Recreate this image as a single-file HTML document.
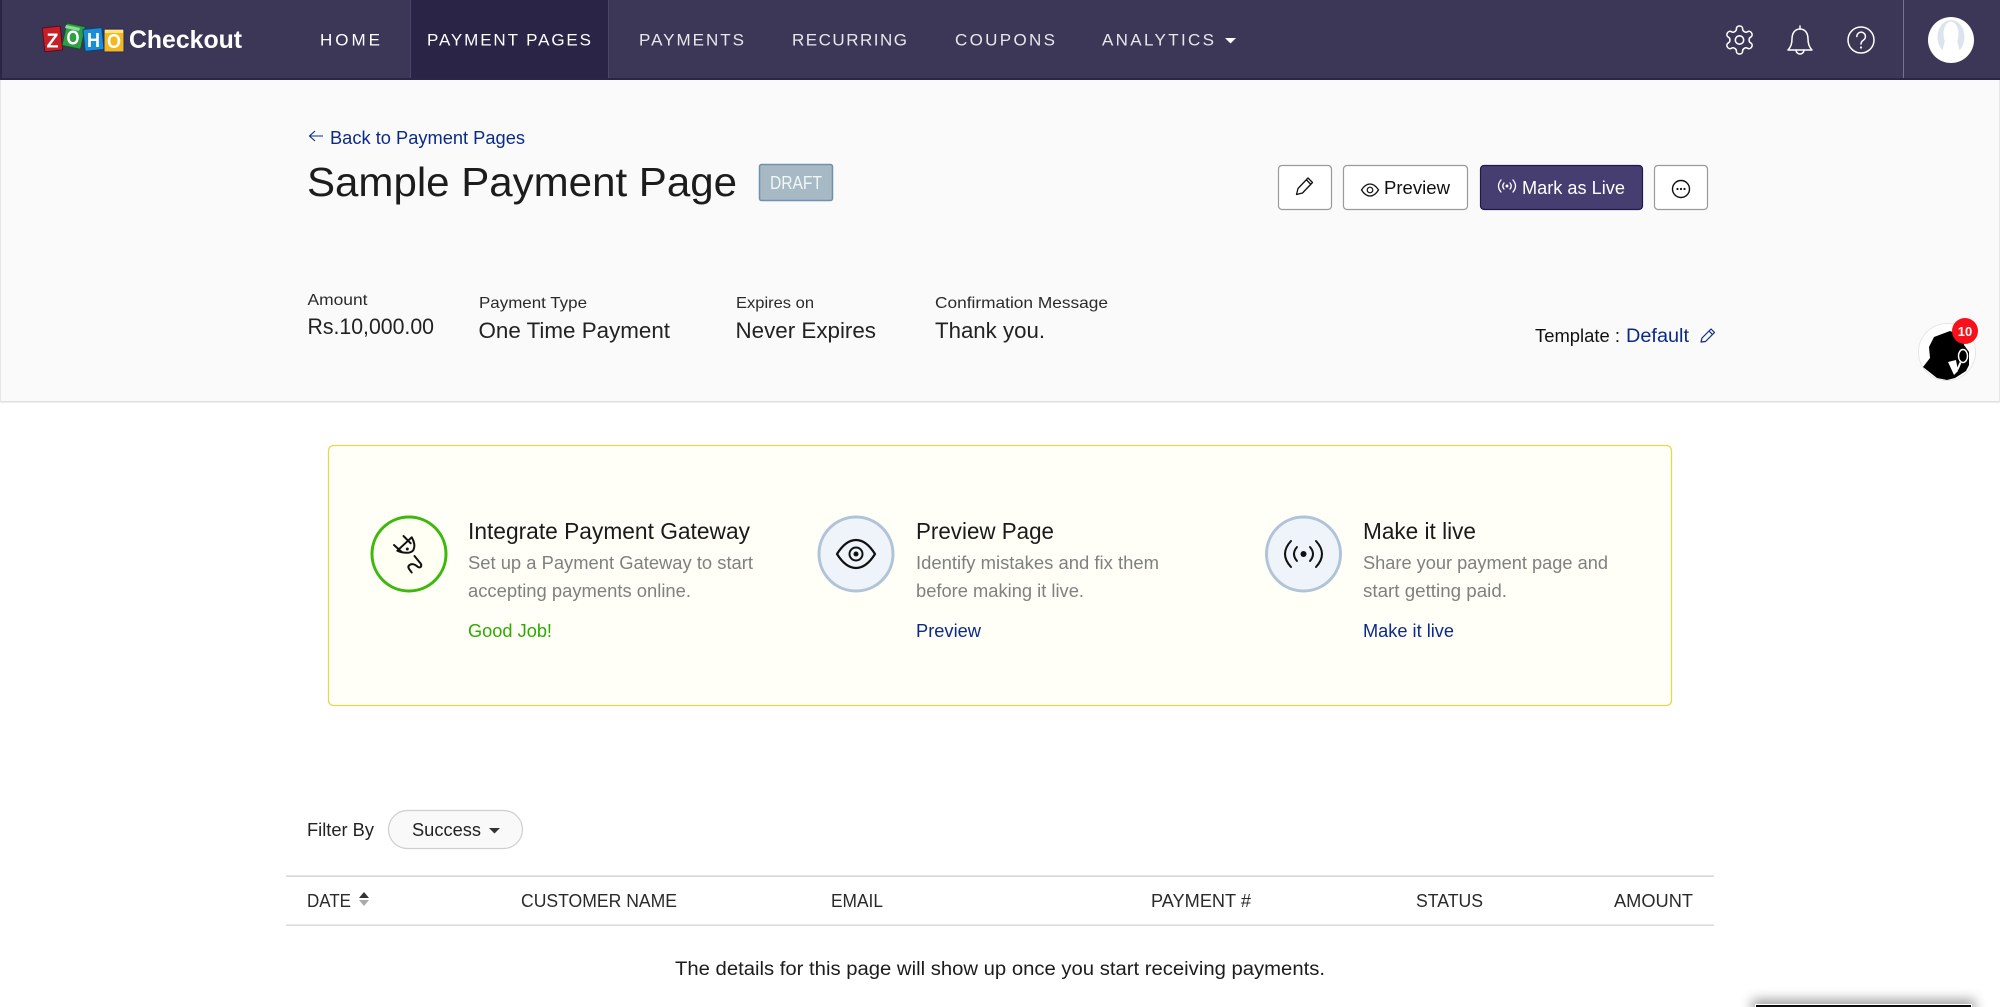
<!DOCTYPE html>
<html lang="en"><head><meta charset="utf-8"><title>Sample Payment Page</title>
<style>
html,body{margin:0;padding:0;background:#fff;width:2000px;height:1007px;overflow:hidden}
svg{display:block}
text{font-family:"Liberation Sans",Arial,sans-serif;fill:#111}
.nav{fill:#fff;font-size:17px}
.lbl{font-size:16px;fill:#2a2a2a}
.val{font-size:22px;fill:#222}
.ttl{font-size:23px;fill:#1a1a1a}
.dsc{font-size:18px;fill:#808080}
.lnk{font-size:18px;fill:#0b2a88}
.hdr{font-size:18px;fill:#2a2a2a}
</style></head><body>
<svg xmlns="http://www.w3.org/2000/svg" width="2000" height="1007" viewBox="0 0 2000 1007">
<defs><filter id="sh" x="-20%" y="-400%" width="140%" height="900%"><feGaussianBlur stdDeviation="6"/></filter></defs>
<rect width="2000" height="1007" fill="#fff"/>

<!-- top nav -->
<rect width="2000" height="79" fill="#3c3757"/>
<rect y="78" width="2000" height="2" fill="#2a2645"/>
<rect width="2" height="79" fill="#2a2645"/>
<rect x="410" width="198" height="78" fill="#2a2547"/>
<rect x="410" width="1" height="78" fill="#4c4768"/><rect x="608" width="1" height="78" fill="#4c4768"/>
<rect x="1903" width="1" height="78" fill="#77738c"/>

<!-- logo -->
<g font-weight="bold" font-size="20">
<rect x="43.500" y="27" width="18" height="24" rx="1" fill="#c81e28" stroke="#5a0c18" transform="rotate(-6 52 39)"/>
<rect x="64" y="24.500" width="19" height="23" rx="1" fill="#2f9e44" stroke="#174f24" transform="rotate(12 73 37)"/>
<path d="M66 25l14 3-1 3-14-3z" fill="#8fdc9a" transform="rotate(0 73 37)"/>
<rect x="84" y="28.500" width="19" height="22" rx="1" fill="#1b8ed6" stroke="#0d3f78" transform="rotate(-6 93 40)"/>
<rect x="104" y="29" width="20" height="23" rx="1" fill="#f4b81a" stroke="#1a2a80"/>
<path d="M105 30h18v3h-18z" fill="#ffe680"/>
<text x="46.500" y="47.500" style="fill:#fff" textLength="12" lengthAdjust="spacingAndGlyphs">Z</text>
<text x="66.500" y="44.500" style="fill:#fff" textLength="13" lengthAdjust="spacingAndGlyphs">O</text>
<text x="87" y="47" style="fill:#fff" textLength="13" lengthAdjust="spacingAndGlyphs">H</text>
<text x="107" y="48" style="fill:#fff" textLength="14" lengthAdjust="spacingAndGlyphs">O</text>
</g>
<text x="129" y="48" font-size="25" font-weight="bold" style="fill:#fff" textLength="113" lengthAdjust="spacingAndGlyphs">Checkout</text>

<text class="nav" x="320" y="45.500" textLength="60">HOME</text>
<text class="nav" x="427" y="45.500" textLength="164">PAYMENT PAGES</text>
<text class="nav" x="639" y="45.500" textLength="105" opacity=".88">PAYMENTS</text>
<text class="nav" x="792" y="45.500" textLength="115" opacity=".88">RECURRING</text>
<text class="nav" x="955" y="45.500" textLength="100" opacity=".88">COUPONS</text>
<text class="nav" x="1102" y="45.500" textLength="112" opacity=".88">ANALYTICS</text>
<path d="M1225 38h11l-5.500 5.500z" fill="#fff"/>

<!-- nav icons -->
<g fill="none" stroke="#fff" stroke-width="1.500" stroke-linejoin="round" stroke-linecap="round">
<g transform="translate(1722.700 23.200) scale(1.400)" stroke-width="1.100"><path d="M12.220 2h-.44a2 2 0 0 0-2 2v.18a2 2 0 0 1-1 1.730l-.43.250a2 2 0 0 1-2 0l-.15-.08a2 2 0 0 0-2.730.730l-.22.380a2 2 0 0 0 .730 2.730l.150.100a2 2 0 0 1 1 1.720v.510a2 2 0 0 1-1 1.740l-.150.090a2 2 0 0 0-.730 2.730l.220.380a2 2 0 0 0 2.730.730l.150-.08a2 2 0 0 1 2 0l.430.250a2 2 0 0 1 1 1.730V20a2 2 0 0 0 2 2h.440a2 2 0 0 0 2-2v-.18a2 2 0 0 1 1-1.730l.430-.25a2 2 0 0 1 2 0l.150.080a2 2 0 0 0 2.730-.73l.220-.39a2 2 0 0 0-.730-2.730l-.150-.08a2 2 0 0 1-1-1.740v-.5a2 2 0 0 1 1-1.740l.150-.09a2 2 0 0 0 .730-2.730l-.220-.38a2 2 0 0 0-2.730-.73l-.150.080a2 2 0 0 1-2 0l-.430-.25a2 2 0 0 1-1-1.730V4a2 2 0 0 0-2-2z"/><circle cx="12" cy="12" r="3"/></g>
<path d="M1788 50c3-3 4-6 4-11 0-6 3-10 8-10s8 4 8 10c0 5 1 8 4 11z"/>
<path d="M1800 26v3M1796 50a4 4 0 0 0 8 0"/>
<circle cx="1861" cy="40" r="13"/>
<path d="M1856.800 36.500a4.300 4.300 0 1 1 6.800 3.500c-1.700 1.100-2.600 2-2.600 4"/>
</g>
<circle cx="1861" cy="47.500" r="1.100" fill="#fff"/>

<!-- avatar -->
<circle cx="1951" cy="40" r="23" fill="#fff"/>
<ellipse cx="1951" cy="37" rx="13.500" ry="17" fill="#dde3ee"/>
<ellipse cx="1951" cy="34" rx="7.500" ry="12.500" fill="#fff"/>
<path d="M1945 40h12l4 17h-20z" fill="#fff"/>

<!-- page header -->
<rect y="80" width="2000" height="322" fill="#fafafa"/>
<rect y="401" width="2000" height="1.500" fill="#dfdfdf"/>
<rect y="80" width="1" height="322" fill="#e6e6e6"/><rect x="1999" y="80" width="1" height="322" fill="#e6e6e6"/>

<path d="M323 136h-13M315 131l-5.500 5 5.500 5" fill="none" stroke="#0b2a88" stroke-width="1.100"/>
<text class="lnk" x="330" y="144" textLength="195" lengthAdjust="spacingAndGlyphs">Back to Payment Pages</text>
<text x="307" y="196" font-size="41" style="fill:#1c1c1c" textLength="430" lengthAdjust="spacingAndGlyphs">Sample Payment Page</text>

<rect x="759.500" y="164.500" width="73" height="36" rx="2" fill="#a7b9c4" stroke="#6f93a8" stroke-width="1.500"/>
<text x="770" y="189" font-size="18" style="fill:#f2f6f8" textLength="52" lengthAdjust="spacingAndGlyphs">DRAFT</text>

<!-- buttons -->
<g fill="#fff" stroke="#9a9a9a" stroke-width="1.200">
<rect x="1278.500" y="165.500" width="53" height="44" rx="3.500"/>
<rect x="1343.500" y="165.500" width="124" height="44" rx="3.500"/>
<rect x="1654.500" y="165.500" width="53" height="44" rx="3.500"/>
</g>
<rect x="1480.500" y="165.500" width="162" height="44" rx="3.500" fill="#463d70" stroke="#1e1a4a" stroke-width="1.200"/>
<path d="M1296.500 194.500l1.500-6 10-10.500 4.500 4.500-10 10.500zM1306.500 180l4.500 4.500" fill="none" stroke="#111" stroke-width="1.300" stroke-linejoin="round"/>
<path d="M1361.500 190c2.500-4 5.500-6 8.500-6s6 2 8.500 6c-2.500 4-5.500 6-8.500 6s-6-2-8.500-6z" fill="none" stroke="#111" stroke-width="1.300"/>
<circle cx="1370" cy="190" r="2.800" fill="none" stroke="#111" stroke-width="1.200"/>
<text x="1384" y="194" font-size="18" textLength="66" lengthAdjust="spacingAndGlyphs">Preview</text>
<g fill="none" stroke="#fff" stroke-width="1.300" stroke-linecap="round">
<path d="M1501 180q-5 6 0 12M1504 183q-2.500 3 0 6M1513 180q5 6 0 12M1510 183q2.500 3 0 6"/>
</g>
<circle cx="1507" cy="186" r="1.500" fill="#fff"/>
<text x="1522" y="194" font-size="18" style="fill:#fff" textLength="103" lengthAdjust="spacingAndGlyphs">Mark as Live</text>
<circle cx="1681" cy="189" r="8.500" fill="none" stroke="#111" stroke-width="1.400"/>
<circle cx="1677.500" cy="189" r="1.100" fill="#111"/><circle cx="1681" cy="189" r="1.100" fill="#111"/><circle cx="1684.500" cy="189" r="1.100" fill="#111"/>

<!-- info -->
<text class="lbl" x="307.500" y="305" textLength="60" lengthAdjust="spacingAndGlyphs">Amount</text>
<text class="lbl" x="479" y="308" textLength="108" lengthAdjust="spacingAndGlyphs">Payment Type</text>
<text class="lbl" x="736" y="308" textLength="78" lengthAdjust="spacingAndGlyphs">Expires on</text>
<text class="lbl" x="935" y="308" textLength="173" lengthAdjust="spacingAndGlyphs">Confirmation Message</text>
<text class="val" x="307.500" y="334" textLength="126.500" lengthAdjust="spacingAndGlyphs">Rs.10,000.00</text>
<text class="val" x="478.500" y="338" textLength="191.500" lengthAdjust="spacingAndGlyphs">One Time Payment</text>
<text class="val" x="735.500" y="338" textLength="140.500" lengthAdjust="spacingAndGlyphs">Never Expires</text>
<text class="val" x="935" y="338" textLength="110" lengthAdjust="spacingAndGlyphs">Thank you.</text>
<text x="1535" y="342" font-size="18.500" textLength="85" lengthAdjust="spacingAndGlyphs">Template :</text>
<text x="1626" y="342" font-size="19" style="fill:#0b2a88" textLength="63" lengthAdjust="spacingAndGlyphs">Default</text>
<path d="M1701 342l1-4 9-9 3.500 3.500-9 9zM1709 331l3.500 3.500" fill="none" stroke="#0b2a88" stroke-width="1.200" stroke-linejoin="round"/>

<!-- floating widget -->
<circle cx="1947" cy="352" r="28.500" fill="#fff" stroke="#e6e6e6"/>
<path d="M1934 337l16-6 12 5 2 9 5 7v13l-3 6-11 7-8 2-10-2-14-11 7-9-1-11z" fill="#000"/>
<path d="M1948 362l8-2 2 11-4 4z" fill="#fff"/>
<ellipse cx="1963" cy="356" rx="4.500" ry="6.500" fill="none" stroke="#fff" stroke-width="1.500"/>
<path d="M1960.500 362.500l-3 7" stroke="#fff" stroke-width="2"/>
<circle cx="1965" cy="331" r="13" fill="#f8101a"/>
<text x="1965" y="336" font-size="13" font-weight="bold" text-anchor="middle" style="fill:#fff">10</text>

<!-- setup card -->
<rect x="328.500" y="445.500" width="1343" height="260" rx="5" fill="#fffff8" stroke="#e4d94c" stroke-width="1.300"/>
<circle cx="409" cy="554" r="37" fill="#fffff3" stroke="#3cb90c" stroke-width="3"/>
<circle cx="856" cy="554" r="37" fill="#eff4fa" stroke="#b0c4d8" stroke-width="3"/>
<circle cx="1303.500" cy="554" r="37" fill="#eff4fa" stroke="#b0c4d8" stroke-width="3"/>

<g fill="none" stroke="#111" stroke-width="2" stroke-linecap="round" stroke-linejoin="round">
<path d="M403.500 536l7.200 7.300M394 545l8 7.300M397.300 550.700l14.400-13.400c2.800 4.500 3.500 9.500 1.500 13-2.500 3.500-10 3-15.900.4z"/>
<path d="M414.500 556l6.500 8c1 3-1 4-3 3-4-3.500-7-3.500-9-1.500-2 2 1 4.500 2.700 7"/>
<path d="M837 554c5-8 11-14 19-14s14 6 19 14c-5 8-11 14-19 14s-14-6-19-14z" stroke-width="2.200"/>
<circle cx="856" cy="554" r="6.500"/>
<path d="M1291 541q-12 13 0 26M1297 547q-6 7 0 14M1316 541q12 13 0 26M1310 547q6 7 0 14"/>
</g>
<circle cx="407.300" cy="549" r="1.500" fill="#111"/>
<circle cx="856" cy="554" r="2.500" fill="#111"/>
<circle cx="1303.500" cy="554" r="3" fill="#111"/>

<text class="ttl" x="468" y="539" textLength="282" lengthAdjust="spacingAndGlyphs">Integrate Payment Gateway</text>
<text class="dsc" x="468" y="569" textLength="285" lengthAdjust="spacingAndGlyphs">Set up a Payment Gateway to start</text>
<text class="dsc" x="468" y="597" textLength="223" lengthAdjust="spacingAndGlyphs">accepting payments online.</text>
<text x="468" y="637" font-size="18" style="fill:#2eaa00" textLength="84" lengthAdjust="spacingAndGlyphs">Good Job!</text>

<text class="ttl" x="916" y="539" textLength="138" lengthAdjust="spacingAndGlyphs">Preview Page</text>
<text class="dsc" x="916" y="569" textLength="243" lengthAdjust="spacingAndGlyphs">Identify mistakes and fix them</text>
<text class="dsc" x="916" y="597" textLength="168" lengthAdjust="spacingAndGlyphs">before making it live.</text>
<text class="lnk" x="916" y="637" textLength="65" lengthAdjust="spacingAndGlyphs">Preview</text>

<text class="ttl" x="1363" y="539" textLength="113" lengthAdjust="spacingAndGlyphs">Make it live</text>
<text class="dsc" x="1363" y="569" textLength="245" lengthAdjust="spacingAndGlyphs">Share your payment page and</text>
<text class="dsc" x="1363" y="597" textLength="144" lengthAdjust="spacingAndGlyphs">start getting paid.</text>
<text class="lnk" x="1363" y="637" textLength="91" lengthAdjust="spacingAndGlyphs">Make it live</text>

<!-- filter -->
<text x="307" y="836" font-size="18" style="fill:#222" textLength="67" lengthAdjust="spacingAndGlyphs">Filter By</text>
<rect x="388.500" y="810.500" width="134" height="38" rx="19" fill="#f9f9f9" stroke="#cfcfcf" stroke-width="1.200"/>
<text x="412" y="836" font-size="18" style="fill:#222" textLength="69" lengthAdjust="spacingAndGlyphs">Success</text>
<path d="M489 828h11l-5.500 5.500z" fill="#333"/>

<!-- table -->
<rect x="286" y="875.500" width="1428" height="1.300" fill="#cfcfcf"/>
<rect x="286" y="924.500" width="1428" height="1.300" fill="#d6d6d6"/>
<text class="hdr" x="307" y="907" textLength="44" lengthAdjust="spacingAndGlyphs">DATE</text>
<path d="M359 898l5-6 5 6z" fill="#333"/><path d="M359 900l5 6 5-6z" fill="#aaa"/>
<text class="hdr" x="521" y="907" textLength="156" lengthAdjust="spacingAndGlyphs">CUSTOMER NAME</text>
<text class="hdr" x="831" y="907" textLength="52" lengthAdjust="spacingAndGlyphs">EMAIL</text>
<text class="hdr" x="1151" y="907" textLength="100" lengthAdjust="spacingAndGlyphs">PAYMENT #</text>
<text class="hdr" x="1416" y="907" textLength="67" lengthAdjust="spacingAndGlyphs">STATUS</text>
<text class="hdr" x="1614" y="907" textLength="79" lengthAdjust="spacingAndGlyphs">AMOUNT</text>
<text x="675" y="975" font-size="19" style="fill:#1c1c1c" textLength="650" lengthAdjust="spacingAndGlyphs">The details for this page will show up once you start receiving payments.</text>

<!-- bottom bar -->
<rect x="1752" y="1000" width="223" height="14" fill="#000" opacity=".4" filter="url(#sh)"/>
<rect x="1755" y="1004" width="217" height="3" fill="#fff"/>
<rect x="1756" y="1005" width="215" height="2" fill="#0c0c0c"/>
</svg>
</body></html>
